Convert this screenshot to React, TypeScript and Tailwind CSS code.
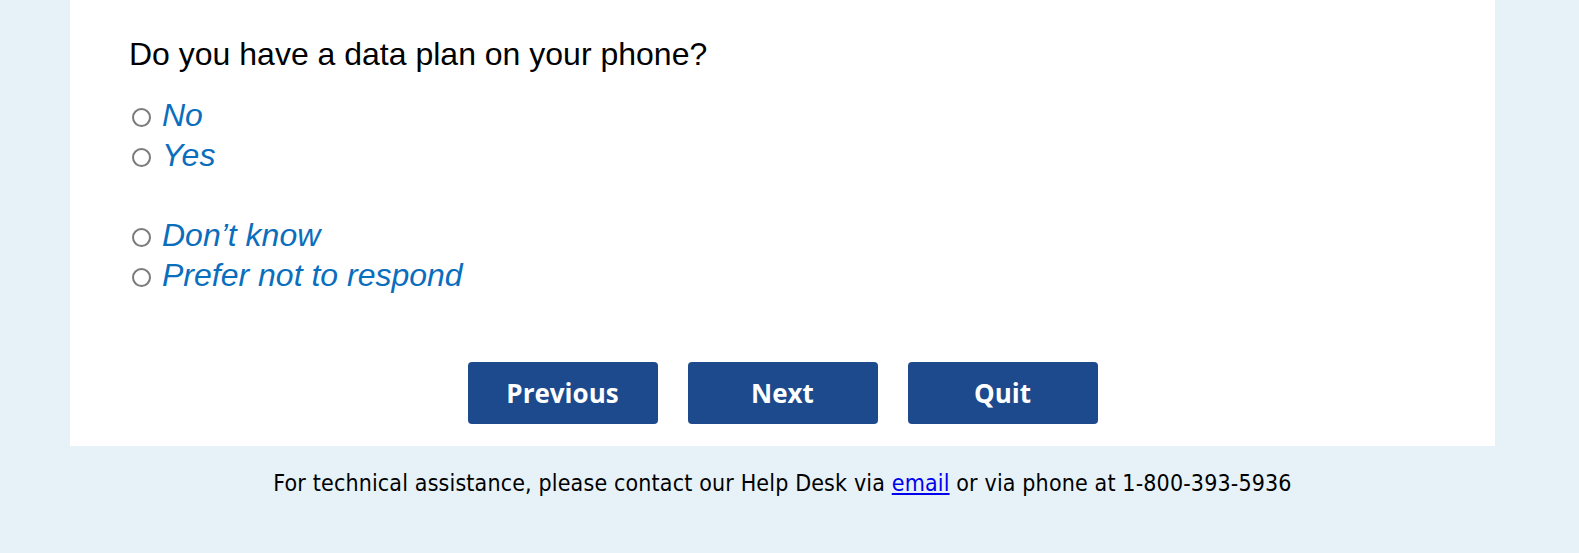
import React from "react";

const options = ["No", "Yes", null, "Don’t know", "Prefer not to respond"];

function Radio() {
  return (
    <span className="mt-[13px] box-border block h-[19px] w-[19px] shrink-0 rounded-full border-2 border-[#7a7a7a] bg-white" />
  );
}

export default function App() {
  return (
    <div className="min-h-[553px] w-full bg-[#e6f2f8]">
      <div className="ml-[70px] w-[1425px]">
        <div className="bg-white pb-[22px] pl-[59px] pt-[34px]">
          <div
            className="text-[32px] leading-[40px] text-black"
            style={{ fontFamily: '"Liberation Sans", Arial, sans-serif' }}
          >
            Do you have a data plan on your phone?
          </div>
          <div className="mt-[21px] flex flex-col">
            {options.map((o, i) =>
              o === null ? (
                <div key={i} className="h-[40px]" />
              ) : (
                <div key={i} className="flex h-[40px] items-start pl-[3px]">
                  <Radio />
                  <span
                    className="ml-[11px] text-[32px] italic leading-[40px] text-[#0a6ebd]"
                    style={{ fontFamily: '"Liberation Sans", Arial, sans-serif' }}
                  >
                    {o}
                  </span>
                </div>
              )
            )}
          </div>
          <div className="mt-[67px] flex justify-center gap-[30px] pr-[59px]">
            {["Previous", "Next", "Quit"].map((b) => (
              <button
                key={b}
                className="flex h-[62px] w-[190px] items-center justify-center rounded-[4px] bg-[#1d4a8c] text-[26px] font-bold text-white"
                style={{ fontFamily: '"Open Sans", sans-serif' }}
              >
                {b}
              </button>
            ))}
          </div>
        </div>
        <div
          className="pt-[22px] text-center text-[23px] leading-[30px] tracking-[0.15px] text-black"
          style={{ fontFamily: '"DejaVu Sans Condensed", "DejaVu Sans", sans-serif' }}
        >
          For technical assistance, please contact our Help Desk via{" "}
          <a href="#" className="text-[#0000ee] underline">
            email
          </a>{" "}
          or via phone at 1-800-393-5936
        </div>
      </div>
    </div>
  );
}
